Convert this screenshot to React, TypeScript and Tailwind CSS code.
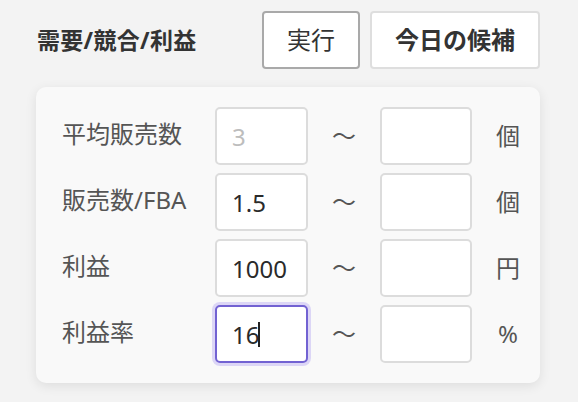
import { ReactNode } from "react";

const font = { fontFamily: '"Noto Sans", "Noto Sans CJK JP", sans-serif' };

type Row = {
  label: string;
  value?: string;
  placeholder?: string;
  unit: string;
  focused?: boolean;
};

const rows: Row[] = [
  { label: "平均販売数", placeholder: "3", unit: "個" },
  { label: "販売数/FBA", value: "1.5", unit: "個" },
  { label: "利益", value: "1000", unit: "円" },
  { label: "利益率", value: "16", unit: "%", focused: true },
];

const Field = ({ value, placeholder, focused }: { value?: string; placeholder?: string; focused?: boolean }) => (
  <div className="relative h-[58px]">
    <input
      type="text"
      readOnly
      defaultValue={value}
      placeholder={placeholder}
      className={
        focused
          ? "w-full h-full rounded-[5px] border-2 border-[#7262d2] ring-[3px] ring-[#dcd6f6] bg-white pl-[15px] text-[24px] text-[#2a2a2a] placeholder:text-[#bdbdbd] outline-none"
          : "w-full h-full rounded-[5px] border-2 border-[#dcdcdc] bg-white pl-[15px] text-[24px] text-[#2a2a2a] placeholder:text-[#bdbdbd] outline-none"
      }
      style={font}
    />
    {focused && <span className="absolute left-[43px] top-[17px] w-[2px] h-[25px] bg-[#222]" />}
  </div>
);

const Cell = ({ children, className }: { children: ReactNode; className?: string }) => (
  <div className={"flex items-center h-[58px] " + (className ?? "")}>{children}</div>
);

export default function App() {
  return (
    <div className="w-[578px] h-[402px] bg-[#f3f3f3] pt-[11px] pl-[36px]" style={font}>
      <div className="w-[504px]">
        <div className="flex items-center">
          <h1 className="pl-px text-[23px] font-bold text-[#333] tracking-[0.3px]">需要/競合/利益</h1>
          <div className="ml-auto flex gap-[10px]">
            <button className="w-[98px] h-[58px] rounded-[4px] border-2 border-[#a9a9a9] bg-white text-[24px] text-[#333]">
              実行
            </button>
            <button className="w-[170px] h-[58px] rounded-[4px] border-2 border-[#dedede] bg-white text-[24px] font-bold text-[#333]">
              今日の候補
            </button>
          </div>
        </div>
        <div className="mt-[18px] h-[296px] rounded-[10px] bg-[#f9f9f9] shadow-[0_3px_12px_rgba(0,0,0,0.09)] pt-[20px] pl-[26px]">
          <div className="grid grid-cols-[129px_93px_24px_92px_24px] gap-x-6 gap-y-2">
            {rows.map((r) => (
              <>
                <Cell key={r.label + "l"} className="text-[24px] text-[#555] -mt-[2px]">
                  {r.label}
                </Cell>
                <Field key={r.label + "a"} value={r.value} placeholder={r.placeholder} focused={r.focused} />
                <Cell key={r.label + "t"} className="justify-center text-[24px] text-[#555]">
                  〜
                </Cell>
                <Field key={r.label + "b"} />
                <Cell key={r.label + "u"} className="justify-center text-[24px] text-[#555]">
                  {r.unit}
                </Cell>
              </>
            ))}
          </div>
        </div>
      </div>
    </div>
  );
}
